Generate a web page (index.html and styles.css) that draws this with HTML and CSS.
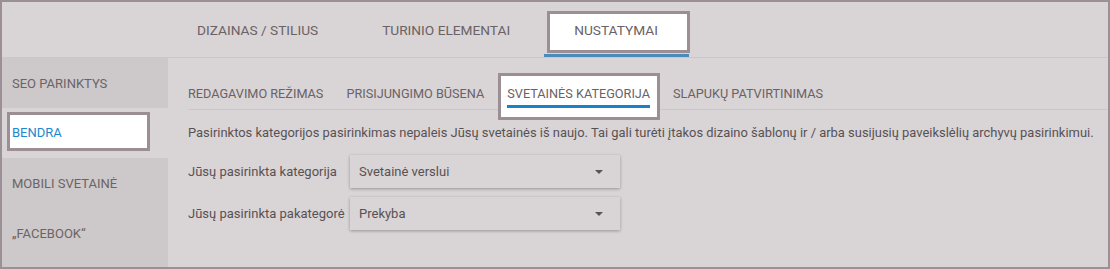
FILE: index.html
```html
<!DOCTYPE html>
<html lang="lt">
<head>
<meta charset="utf-8">
<link rel="stylesheet" href="styles.css">
</head>
<body>
<div class="frame">
  <nav class="topnav">
    <div class="tab">DIZAINAS / STILIUS</div>
    <div class="tab">TURINIO ELEMENTAI</div>
    <div class="tab active"><span class="label">NUSTATYMAI</span></div>
  </nav>
  <div class="body">
    <aside class="sidebar">
      <div class="side-item">SEO PARINKTYS</div>
      <div class="side-item active"><span class="side-box">BENDRA</span></div>
      <div class="side-item">MOBILI SVETAINĖ</div>
      <div class="side-item">„FACEBOOK“</div>
    </aside>
    <main class="main">
      <div class="subtabs">
        <div class="subtab">REDAGAVIMO REŽIMAS</div>
        <div class="subtab">PRISIJUNGIMO BŪSENA</div>
        <div class="subtab active"><span class="label">SVETAINĖS KATEGORIJA</span></div>
        <div class="subtab">SLAPUKŲ PATVIRTINIMAS</div>
      </div>
      <p class="desc">Pasirinktos kategorijos pasirinkimas nepaleis Jūsų svetainės iš naujo. Tai gali turėti įtakos dizaino šablonų ir / arba susijusių paveikslėlių archyvų pasirinkimui.</p>
      <div class="field">
        <span class="field-label">Jūsų pasirinkta kategorija</span>
        <div class="select"><span>Svetainė verslui</span><span class="caret"></span></div>
      </div>
      <div class="field">
        <span class="field-label">Jūsų pasirinkta pakategorė</span>
        <div class="select"><span>Prekyba</span><span class="caret"></span></div>
      </div>
    </main>
  </div>
</div>
</body>
</html>
```

FILE: styles.css
```css
* { box-sizing: border-box; }
html, body { margin: 0; padding: 0; }
body {
  font-family: Roboto, "Liberation Sans", sans-serif;
  background: #d9d3d4;
}
.frame {
  width: 1110px;
  height: 269px;
  border: 2px solid #9b9095;
  background: #d9d4d5;
  display: flex;
  flex-direction: column;
  overflow: hidden;
}
.topnav {
  height: 56px;
  flex: none;
  border-bottom: 1px solid #cbc6c7;
  display: flex;
  padding-left: 163px;
}
.tab {
  position: relative;
  display: flex;
  align-items: center;
  padding: 0 32px;
  font-size: 13.7px;
  color: #6a6265;
  height: 55px;
}
.tab .label { position: relative; z-index: 1; }
.tab.active::before {
  content: "";
  position: absolute;
  left: 5px; right: 0; top: 9px; bottom: 4px;
  background: #fff;
  border: 3px solid #9b8f94;
}
.tab.active::after {
  content: "";
  position: absolute;
  left: 2px; right: 1px; bottom: 0;
  height: 3px;
  background: #4a8bbb;
}
.body {
  flex: 1;
  display: flex;
  min-height: 0;
}
.sidebar {
  width: 166px;
  flex: none;
  background: #cdc8c9;
  display: flex;
  flex-direction: column;
}
.side-item {
  height: 50px;
  flex: none;
  display: flex;
  align-items: center;
  padding-left: 10px;
  font-size: 13px;
  color: #6b6466;
}
.side-item.active {
  background: #d9d4d5;
  align-items: flex-start;
  padding: 4px 18px 0 5px;
}
.side-box {
  display: flex;
  align-items: center;
  width: 100%;
  height: 39px;
  background: #fff;
  border: 3px solid #9b8f94;
  padding-left: 2px;
  padding-top: 2px;
  color: #1d88cf;
}
.main {
  flex: 1;
  padding: 15px 0 0 20px;
}
.subtabs {
  display: flex;
  gap: 23px;
  border-bottom: 1px solid #cbc6c7;
  height: 37px;
}
.subtab {
  position: relative;
  display: flex;
  align-items: center;
  font-size: 12.7px;
  color: #6a6265;
  padding: 5px 0 1px;
}
.subtab .label { position: relative; z-index: 1; }
.subtab.active::before {
  content: "";
  position: absolute;
  left: -9px; right: -10px; top: 0; bottom: -11px;
  background: #fff;
  border: 3px solid #9b8f94;
}
.subtab.active::after {
  content: "";
  position: absolute;
  left: 0; right: 0; bottom: 1px;
  height: 3px;
  background: #1a82cb;
  z-index: 1;
}
.desc {
  margin: 14px 0 0;
  font-size: 12.93px;
  color: #585154;
  line-height: 18px;
}
.field {
  display: flex;
  align-items: center;
  margin-top: 13px;
}
.field + .field { margin-top: 9px; }
.field-label {
  width: 162px;
  flex: none;
  font-size: 13px;
  color: #585154;
}
.select {
  width: 270px;
  height: 33px;
  display: flex;
  align-items: center;
  justify-content: space-between;
  padding: 0 17px 0 9px;
  font-size: 13px;
  color: #585154;
  background: #d9d4d5;
  box-shadow: 0 1px 3px rgba(0,0,0,0.3);
}
.caret {
  width: 0; height: 0;
  border-left: 4px solid transparent;
  border-right: 4px solid transparent;
  border-top: 4px solid #555;
}
```
